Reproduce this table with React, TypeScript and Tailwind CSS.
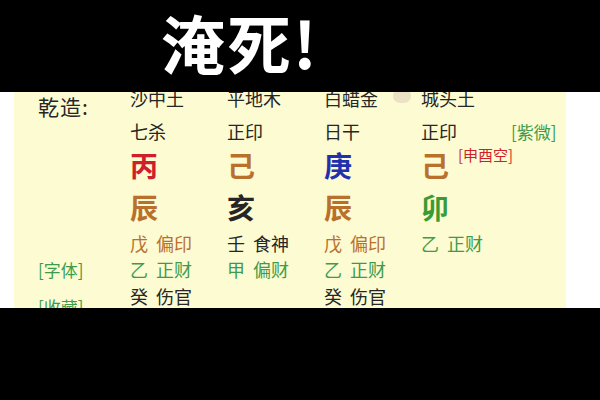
import React from "react";

const F = { fontFamily: '"Noto Sans CJK SC", "Noto Sans", sans-serif' };

const RED = "text-[#cf1f2a]";
const BROWN = "text-[#b8702c]";
const BLUE = "text-[#2230b0]";
const GREEN = "text-[#3f9b4c]";
const BLACK = "text-[#262626]";

function Cell({ w, children, className = "" }: { w: string; children?: React.ReactNode; className?: string }) {
  return <div className={`${w} shrink-0 flex items-center ${className}`}>{children}</div>;
}

function Row({ h, cells }: { h: string; cells: React.ReactNode[] }) {
  const widths = ["w-[92px]", "w-[97px]", "w-[97px]", "w-[97px]", "w-[90px]", "w-[50px]"];
  return (
    <div className={`flex ${h}`}>
      {cells.map((c, i) => (
        <Cell key={i} w={widths[i]}>
          {c}
        </Cell>
      ))}
    </div>
  );
}

function Pair({ a, b, color }: { a: string; b: string; color: string }) {
  return (
    <span className={`flex gap-[8px] text-[18px] leading-none whitespace-nowrap ${color}`}>
      <span>{a}</span>
      <span>{b}</span>
    </span>
  );
}

export default function App() {
  const sm = "text-[18px] leading-none whitespace-nowrap";
  const lg = "text-[28px] leading-none font-semibold";
  return (
    <div className="w-[600px] h-[400px] bg-black flex flex-col overflow-hidden" style={F}>
      <div className="h-[92px] shrink-0 flex items-center pl-[161px] pb-[10px]">
        <span className="text-white text-[64px] font-bold leading-none tracking-[2px]">淹死!</span>
      </div>
      <div className="h-[216px] shrink-0 bg-white overflow-hidden">
        <div className="ml-[14px] w-[552px] h-full bg-[#fdfbd2] overflow-hidden">
          <div className="mt-[-12px] pl-[24px] flex flex-col">
            <Row
              h="h-[36px]"
              cells={[
                <span className={`text-[21px] leading-none tracking-[1px] mt-[16px] ${BLACK}`}>乾造:</span>,
                <span className={`${sm} ${BLACK}`}>沙中土</span>,
                <span className={`${sm} ${BLACK}`}>平地木</span>,
                <span className={`${sm} ${BLACK} flex items-center`}>
                  白蜡金
                  <span className="ml-[15px] w-[18px] h-[14px] rounded-full bg-[#ece1c4] -mt-[4px]" />
                </span>,
                <span className={`${sm} ${BLACK}`}>城头土</span>,
                null,
              ]}
            />
            <Row
              h="h-[30px]"
              cells={[
                null,
                <span className={`${sm} ${BLACK}`}>七杀</span>,
                <span className={`${sm} ${BLACK}`}>正印</span>,
                <span className={`${sm} ${BLACK}`}>日干</span>,
                <span className={`${sm} ${BLACK}`}>正印</span>,
                <span className={`text-[17px] leading-none whitespace-nowrap ${GREEN}`}>[紫微]</span>,
              ]}
            />
            <Row
              h="h-[38px]"
              cells={[
                null,
                <span className={`${lg} ${RED}`}>丙</span>,
                <span className={`${lg} ${BROWN}`}>己</span>,
                <span className={`${lg} ${BLUE}`}>庚</span>,
                <span className="flex items-start">
                  <span className={`${lg} ${BROWN}`}>己</span>
                  <span className={`ml-[9px] -mt-[4px] text-[15px] leading-none whitespace-nowrap ${RED}`}>[申酉空]</span>
                </span>,
                null,
              ]}
            />
            <Row
              h="h-[46px]"
              cells={[
                null,
                <span className={`${lg} ${BROWN}`}>辰</span>,
                <span className={`${lg} ${BLACK}`}>亥</span>,
                <span className={`${lg} ${BROWN}`}>辰</span>,
                <span className={`${lg} text-[#3a9a34]`}>卯</span>,
                null,
              ]}
            />
            <Row
              h="h-[26px]"
              cells={[
                null,
                <Pair a="戊" b="偏印" color={BROWN} />,
                <Pair a="壬" b="食神" color={BLACK} />,
                <Pair a="戊" b="偏印" color={BROWN} />,
                <Pair a="乙" b="正财" color={GREEN} />,
                null,
              ]}
            />
            <Row
              h="h-[26px]"
              cells={[
                <span className={`text-[17px] leading-none ${GREEN}`}>[字体]</span>,
                <Pair a="乙" b="正财" color={GREEN} />,
                <Pair a="甲" b="偏财" color={GREEN} />,
                <Pair a="乙" b="正财" color={GREEN} />,
                null,
                null,
              ]}
            />
            <Row
              h="h-[28px]"
              cells={[
                <span className={`text-[17px] leading-none ${GREEN} mt-[20px]`}>[收藏]</span>,
                <Pair a="癸" b="伤官" color={BLACK} />,
                null,
                <Pair a="癸" b="伤官" color={BLACK} />,
                null,
                null,
              ]}
            />
          </div>
        </div>
      </div>
    </div>
  );
}
